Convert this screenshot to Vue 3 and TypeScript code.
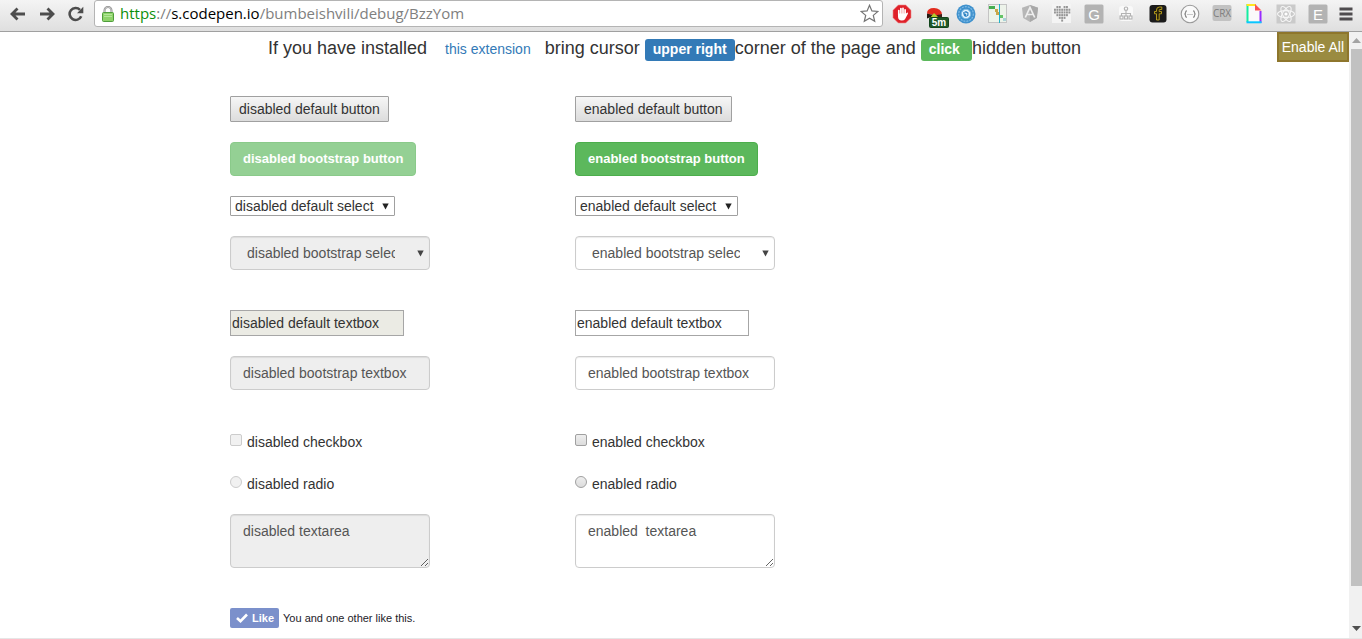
<script setup lang="ts">
import { ref } from 'vue'

interface Column {
  state: 'disabled' | 'enabled'
  disabled: boolean
  areaText: string
}

const columns: Column[] = [
  { state: 'disabled', disabled: true, areaText: 'disabled textarea' },
  { state: 'enabled', disabled: false, areaText: 'enabled  textarea' },
]

const heartRows = ['0110110', '1111111', '1111111', '0111110', '0011100', '0001000']
const hearts = heartRows.flatMap((row, y) =>
  [...row].map((v, x) => ({ x: 2 + x * 2.4, y: 2 + y * 2.7, on: v === '1' })).filter((d) => d.on),
)

const liked = ref(true)
</script>

<template>
  <div class="window">
    <header class="toolbar">
      <nav class="nav">
        <button type="button" aria-label="Back">
          <svg width="16" height="14" viewBox="0 0 16 14"><path d="M7.500 1.500 2 7l5.500 5.500M2.500 7H15" fill="none" stroke="#4d4d4d" stroke-width="2.800" /></svg>
        </button>
        <button type="button" aria-label="Forward">
          <svg width="16" height="14" viewBox="0 0 16 14"><path d="M8.500 1.500 14 7l-5.500 5.500M13.500 7H1" fill="none" stroke="#4d4d4d" stroke-width="2.800" /></svg>
        </button>
        <button type="button" aria-label="Reload">
          <svg width="16" height="16" viewBox="0 0 16 16"><path d="M13.200 10.200A6 6 0 1 1 12 3.800" fill="none" stroke="#4d4d4d" stroke-width="2.600" /><path d="M15.300.8v6.400H9z" fill="#4d4d4d" /></svg>
        </button>
      </nav>
      <div class="address">
        <svg class="lock" width="12" height="16" viewBox="0 0 12 16">
          <path d="M2.500 7V4.500a3.500 3.500 0 0 1 7 0V7" fill="none" stroke="#8b8b8b" stroke-width="2" />
          <path d="M2.500 7V4.500a3.500 3.500 0 0 1 7 0V7" fill="none" stroke="#ddd" stroke-width=".7" />
          <rect x=".5" y="6.500" width="11" height="9" rx="1" fill="#8ed36a" stroke="#4f9d3c" />
          <path d="M2 8.500h8M2 10.500h8" stroke="#b4e79a" />
        </svg>
        <div class="url" role="textbox" aria-label="Address"><span class="scheme">https</span>://<span class="host">s.codepen.io</span>/bumbeishvili/debug/BzzYom</div>
        <button type="button" class="star" aria-label="Bookmark">
          <svg width="19" height="19" viewBox="0 0 19 19"><path d="m9.500 1.300 2.400 5.600 6 .5-4.600 4 1.400 5.900-5.200-3.100-5.200 3.100 1.400-5.900-4.600-4 6-.5z" fill="#fff" stroke="#747474" stroke-width="1.200" /></svg>
        </button>
      </div>
      <div class="extensions">
        <button type="button" aria-label="Ad blocker">
          <svg width="20" height="20" viewBox="0 0 20 20">
            <path d="M6.300 1h7.400L19 6.300v7.400L13.700 19H6.300L1 13.700V6.300z" fill="#df2029" stroke="#ee8b8b" stroke-width=".6" />
            <path d="M6.800 11V6.600M8.900 10V4.600M11 10V4.300M13.100 11V5.800" stroke="#fff" stroke-width="1.700" stroke-linecap="round" />
            <path d="M6 9.500h8l1.300-.9q1 .1.600 1.100L13 15.300Q12 16.500 9.800 16.500 6 16.500 6 12.500z" fill="#fff" />
          </svg>
        </button>
        <button type="button" aria-label="Timer">
          <svg class="timer" width="24" height="22" viewBox="0 0 24 22">
            <path d="M2 7.500Q2 2 9 2q7 0 8 6.500l-7 1z" fill="#e12a1c" /><path d="M2 7.500v5l8-3z" fill="#24170f" /><path d="m10 9.500 7-1.500v5h-7z" fill="#3d2019" /><path d="m9 7 5 5H5z" fill="#b1cf2e" />
            <rect x="4.500" y="11.500" width="19" height="10" rx="1" fill="#1e5727" stroke="#12451b" />
            <text x="14" y="20" text-anchor="middle" fill="#fff" font-family="Liberation Sans, Arial, sans-serif" font-size="10" font-weight="700">5m</text>
          </svg>
        </button>
        <button type="button" aria-label="Sync">
          <svg width="20" height="20" viewBox="0 0 20 20">
            <circle cx="10" cy="10" r="9.500" fill="#3f91cd" /><circle cx="10" cy="10" r="7.300" fill="none" stroke="#7fbbe5" stroke-width="1.200" stroke-dasharray="2 1" /><circle cx="10" cy="10" r="4.700" fill="#e3f3ff" stroke="#7fbbe5" stroke-width="1" /><path d="M7 8.500 10 7l2.500 1.500v3L10 13l-2-1z" fill="#2f84c4" /><path d="m8.500 9 2.500.5-.5 2" fill="none" stroke="#fff" stroke-width=".9" />
          </svg>
        </button>
        <button type="button" aria-label="Network timeline">
          <svg width="20" height="20" viewBox="0 0 20 20">
            <rect x=".5" y=".5" width="18" height="18" fill="#edf3ea" stroke="#c4c4c4" /><path d="M1 2h6v3H1z" fill="#46ad4f" /><path d="M7 5h3v3H7zM8 8h3v3H8z" fill="#c9a849" /><path d="M12 11h3v3h-3z" fill="#64c467" /><path d="M15 14h3v3h-3z" fill="#a9d3d7" /><path d="M11.500 0v19" stroke="#22b3c8" />
          </svg>
        </button>
        <button type="button" aria-label="Angular inspector">
          <svg width="20" height="20" viewBox="0 0 20 20">
            <path d="m10 1 8 2.800L16.800 14 10 18 3.200 14 2 3.800z" fill="#b6b6b6" /><path d="m10 1 8 2.800L16.800 14 10 18z" fill="#a9a9a9" /><path d="m5.300 13.500 4.700-10 4.700 10M7 10.500h6" fill="none" stroke="#eee" stroke-width="1.700" />
          </svg>
        </button>
        <button type="button" aria-label="Favourites">
          <svg width="20" height="20" viewBox="0 0 20 20">
            <rect width="19" height="19" fill="#f4f4f4" />
            <rect v-for="(d, i) in hearts" :key="i" :x="d.x" :y="d.y" width="1.900" height="2.100" fill="#969696" />
          </svg>
        </button>
        <button type="button" aria-label="G extension">
          <svg width="20" height="20" viewBox="0 0 20 20"><rect x=".5" y=".5" width="19" height="19" rx="1.500" fill="#b3b3b3" /><text x="10" y="16" text-anchor="middle" fill="#fff" font-family="Liberation Sans, Arial, sans-serif" font-size="15">G</text></svg>
        </button>
        <button type="button" aria-label="Sitemap">
          <svg width="20" height="20" viewBox="0 0 20 20">
            <rect x="3" y="2" width="14" height="15" rx="3" fill="#f9f9f9" /><path d="M10 6v6M5.500 12V9.500h9V12" fill="none" stroke="#b4b4b4" stroke-width="1.100" /><g fill="#f9f9f9" stroke="#b4b4b4" stroke-width="1.200"><circle cx="10" cy="4.700" r="1.700" /><rect x="4" y="12" width="3" height="3" /><rect x="8.500" y="12" width="3" height="3" /><rect x="13" y="12" width="3" height="3" /></g>
          </svg>
        </button>
        <button type="button" aria-label="Font tool">
          <svg width="20" height="20" viewBox="0 0 20 20"><rect x="1.500" y="1" width="17" height="17.500" rx="3" fill="#1b1b1b" /><path d="M8.500 16V9.800H6.500V7.500h2V6q0-3 3-3h2.300v2.500H12q-.8 0-.8.8v1.200h2.300v2.300h-2.300V16z" fill="#28220a" stroke="#bfa51d" stroke-width=".9" /></svg>
        </button>
        <button type="button" aria-label="JSON viewer">
          <svg width="20" height="20" viewBox="0 0 20 20"><circle cx="10" cy="10" r="8.800" fill="#fafafa" stroke="#999" stroke-width="1.100" /><path d="M7 6.800q-1.500 0-1.500 1.600T4.300 10q1.200 0 1.200 1.600T7 13.200M13 6.800q1.500 0 1.500 1.600t1.200 1.600q-1.200 0-1.200 1.600T13 13.200" fill="none" stroke="#8a8a8a" stroke-width="1.200" /><path d="M7.500 10.500h1M9.500 10.500h1M11.500 10.500h1" stroke="#999" /></svg>
        </button>
        <button type="button" aria-label="CRX extension">
          <svg width="20" height="20" viewBox="0 0 20 20"><rect x=".5" y="1" width="19" height="16" rx="2" fill="#c2c2c2" /><text x="10" y="13" text-anchor="middle" fill="#7d7d7d" font-family="Open Sans, sans-serif" font-size="10">CRX</text></svg>
        </button>
        <button type="button" aria-label="Colour page">
          <svg width="20" height="20" viewBox="0 0 20 20"><path d="M3 1h9l5 6v12H3z" fill="#fafafa" /><path d="M3.500 0v18" stroke="#15eda1" stroke-width="2" /><path d="M2.500 1H12" stroke="#ffe51e" stroke-width="2" /><path d="M16.500 7v12" stroke="#982bff" stroke-width="2" /><path d="M2.500 18.300h15" stroke="#0ac6ff" stroke-width="2" /><path d="m11 0 6.500 6.500H11z" fill="#fb5252" /></svg>
        </button>
        <button type="button" aria-label="React inspector">
          <svg width="20" height="20" viewBox="0 0 20 20"><rect x=".5" y=".5" width="19" height="19" fill="#cacaca" /><g fill="none" stroke="#f6f6f6" stroke-width="1.100"><ellipse cx="10" cy="10" rx="8.500" ry="3.400" /><ellipse cx="10" cy="10" rx="8.500" ry="3.400" transform="rotate(60 10 10)" /><ellipse cx="10" cy="10" rx="8.500" ry="3.400" transform="rotate(120 10 10)" /></g><circle cx="10" cy="10" r="1.600" fill="#fff" /></svg>
        </button>
        <button type="button" aria-label="E extension">
          <svg width="20" height="20" viewBox="0 0 20 20"><rect x=".5" y=".5" width="19" height="19" rx="1.500" fill="#b3b3b3" /><text x="10" y="16" text-anchor="middle" fill="#fff" font-family="Liberation Sans, Arial, sans-serif" font-size="15">E</text></svg>
        </button>
        <button type="button" class="menu" aria-label="Menu">
          <svg width="14" height="14" viewBox="0 0 14 14"><path d="M.5 2h13M.5 7h13M.5 12h13" stroke="#4f4c4f" stroke-width="2.800" /></svg>
        </button>
      </div>
    </header>

    <div class="viewport">
      <main class="page">
        <button type="button" class="enable-all">Enable All</button>
        <h1 class="intro">
          <span>If you have installed</span>
          <a href="#extension">this extension</a>
          <span class="bring">bring cursor</span>
          <span class="tag tag-blue">upper right</span>
          <span class="corner">corner of the page and</span>
          <span class="tag tag-green">click</span>
          <span>hidden button</span>
        </h1>

        <div class="columns">
          <form v-for="c in columns" :key="c.state" class="column" @submit.prevent>
            <button type="button" class="plain-button" :disabled="c.disabled">{{ c.state }} default button</button>
            <button type="button" class="bs-button" :disabled="c.disabled">{{ c.state }} bootstrap button</button>
            <div class="select-wrap">
              <select class="plain-select" :disabled="c.disabled" :aria-label="c.state + ' default select'">
                <option>{{ c.state }} default select</option>
              </select>
              <svg class="arrow" width="7" height="7" viewBox="0 0 7 7"><path d="M.3.500h6.400L3.500 6.500z" fill="#222" /></svg>
            </div>
            <div class="select-wrap wide">
              <select class="bs-field bs-select" :disabled="c.disabled" :aria-label="c.state + ' bootstrap select'">
                <option>{{ c.state }} bootstrap select</option>
              </select>
              <svg class="arrow" width="7" height="7" viewBox="0 0 7 7"><path d="M.3.500h6.400L3.500 6.500z" fill="#444" /></svg>
            </div>
            <input type="text" class="plain-input" :disabled="c.disabled" :value="c.state + ' default textbox'" :aria-label="c.state + ' default textbox'" />
            <input type="text" class="bs-field" :disabled="c.disabled" :value="c.state + ' bootstrap textbox'" :aria-label="c.state + ' bootstrap textbox'" />
            <label class="choice first"><input type="checkbox" :disabled="c.disabled" />{{ c.state }} checkbox</label>
            <label class="choice"><input type="radio" :disabled="c.disabled" />{{ c.state }} radio</label>
            <textarea class="bs-field area" :disabled="c.disabled" :value="c.areaText" :aria-label="c.state + ' textarea'"></textarea>
            <div v-if="c.disabled" class="social">
              <button type="button" class="like" :aria-pressed="liked" @click="liked = !liked">
                <svg width="12" height="10" viewBox="0 0 12 10"><path d="m1 5 3.500 3.200L11 1.500" fill="none" stroke="#fff" stroke-width="2.600" /></svg>
                Like
              </button>
              <span>You and one other like this.</span>
            </div>
          </form>
        </div>
      </main>
      <div class="scrollbar" aria-hidden="true">
        <svg width="9" height="5" viewBox="0 0 9 5"><path d="M0 5h9L4.500 0z" fill="#a3a3a3" /></svg>
        <div class="track"><div class="thumb"></div></div>
        <svg width="9" height="5" viewBox="0 0 9 5"><path d="M0 0h9L4.500 5z" fill="#505050" /></svg>
      </div>
    </div>
  </div>
</template>

<style>
body {
  margin: 0;
  overflow: hidden;
}
</style>

<style scoped>
* {
  box-sizing: border-box;
}
.window {
  display: flex;
  flex-direction: column;
  height: 100vh;
  border-bottom: 1px solid #e6e6e6;
  background: #fff;
  color: #333;
  font-family: "Liberation Sans", Arial, sans-serif;
  font-size: 14px;
  line-height: 20px;
}
button,
input,
select,
textarea {
  margin: 0;
  font: inherit;
  color: inherit;
}
svg {
  display: block;
  flex: none;
}

.toolbar {
  display: flex;
  flex: none;
  height: 32px;
  padding-bottom: 4px;
  border-bottom: 1px solid #a0a0a0;
  background: linear-gradient(#f4f4f4, #dfdfdf);
}
.toolbar button {
  display: flex;
  align-items: center;
  justify-content: center;
  padding: 0;
  border: 0;
  background: none;
}
.nav {
  display: flex;
  padding-left: 3px;
  width: 94px;
}
.nav button {
  width: 29px;
}
.address {
  display: flex;
  flex: 1;
  align-items: center;
  min-width: 0;
  padding: 0 3px 0 7px;
  border: 1px solid #b4b4b4;
  border-radius: 3px;
  background: #fff;
}
.url {
  flex: 1;
  margin-left: 6px;
  padding-bottom: 2px;
  overflow: hidden;
  color: #808080;
  font-family: "Open Sans", "Noto Sans", sans-serif;
  font-size: 15px;
  white-space: nowrap;
}
.scheme {
  color: #0b8f0b;
}
.host {
  color: #000;
}
.extensions {
  display: flex;
  margin-left: 3px;
}
.extensions button {
  width: 32px;
}
.extensions .menu {
  width: 28px;
  padding-right: 4px;
}
.extensions .timer {
  margin-left: 6px;
  margin-top: 6px;
}

.viewport {
  display: flex;
  flex: 1;
  min-height: 0;
}
.page {
  position: relative;
  flex: 1;
  min-width: 0;
  overflow: hidden;
}
.enable-all {
  position: absolute;
  top: 0;
  right: 0;
  height: 30px;
  padding: 0 3px;
  border: 2px solid #8e762c;
  background: #9a8b40;
  color: #fff;
}
.intro {
  display: flex;
  align-items: baseline;
  justify-content: center;
  height: 24px;
  margin: 6px 0 34px;
  font-size: 18px;
  font-weight: 400;
  line-height: 20px;
  white-space: nowrap;
}
.intro a {
  margin: 0 14px 0 18px;
  color: #337ab7;
  font-size: 14px;
  text-decoration: none;
}
.bring,
.corner {
  margin-right: 5px;
}
.tag {
  padding: 3px 8px 5px;
  border-radius: 3px;
  color: #fff;
  font-size: 14px;
  font-weight: 700;
  line-height: 14px;
}
.tag-blue {
  background: #337ab7;
}
.tag-green {
  padding-right: 12px;
  background: #5cb85c;
}

.columns {
  display: flex;
  gap: 145px;
  max-width: 889px;
  margin: 0 auto;
}
.column {
  display: flex;
  flex-direction: column;
  align-items: flex-start;
  gap: 20px;
  width: 200px;
}
.plain-button {
  height: 26px;
  padding: 0 8px;
  border: 1px solid #a0a0a0;
  border-radius: 1px;
  background: linear-gradient(#f6f6f6, #dcdcdc);
  white-space: nowrap;
}
.bs-button {
  height: 34px;
  padding: 0 12px;
  border: 1px solid #4cae4c;
  border-radius: 4px;
  background: #5cb85c;
  color: #fff;
  font-size: 13px;
  font-weight: 700;
  white-space: nowrap;
}
.bs-button:disabled {
  opacity: 0.65;
}
.select-wrap {
  position: relative;
  display: flex;
}
.wide {
  width: 100%;
}
select {
  appearance: none;
  opacity: 1;
}
.plain-select {
  height: 20px;
  padding: 0 20px 0 4px;
  border: 1px solid #a0a0a0;
  border-radius: 1px;
  background: #fff;
  line-height: 18px;
}
.arrow {
  position: absolute;
  top: 50%;
  right: 6px;
  margin-top: -3px;
  pointer-events: none;
}
.bs-field {
  width: 100%;
  height: 34px;
  padding: 6px 12px;
  border: 1px solid #ccc;
  border-radius: 4px;
  background: #fff;
  box-shadow: inset 0 1px 1px rgba(0, 0, 0, 0.08);
  color: #555;
}
.bs-field:disabled {
  background: #eee;
}
.bs-select {
  padding: 6px 34px 6px 16px;
}
.plain-input {
  width: 174px;
  height: 26px;
  margin-top: 20px;
  padding: 1px;
  border: 1px solid #a6a6a6;
  border-radius: 0;
  background: #fff;
}
.plain-input:disabled {
  background: #ebebe4;
}
.choice {
  display: flex;
  align-items: flex-start;
  gap: 5px;
  padding-top: 2px;
}
.first {
  margin-top: 20px;
}
.choice input {
  appearance: none;
  width: 12px;
  height: 12px;
  margin-top: 2px;
  border: 1px solid #a0a0a0;
  border-radius: 2px;
  background: linear-gradient(#eee, #dcdcdc);
}
.choice input[type='radio'] {
  border-radius: 50%;
}
.choice input:disabled {
  border-color: #ccc;
  background: #f1f1f1;
}
.area {
  display: block;
  height: 54px;
  overflow: hidden;
  resize: both;
}
.social {
  display: flex;
  align-items: center;
  gap: 4px;
  margin-top: 20px;
  color: #1d2129;
  font-size: 11px;
  white-space: nowrap;
}
.like {
  display: flex;
  align-items: center;
  gap: 4px;
  height: 20px;
  padding: 0 5px 0 6px;
  border: 0;
  border-radius: 2px;
  background: #7b90cb;
  color: #fff;
  font-weight: 700;
}

.scrollbar {
  display: flex;
  flex: none;
  flex-direction: column;
  align-items: center;
  gap: 6px;
  width: 13px;
  padding: 6px 0 7px 2px;
  background: #f1f1f1;
}
.track {
  flex: 1;
  width: 100%;
}
.thumb {
  height: 94%;
  background: #c1c1c1;
}
</style>
